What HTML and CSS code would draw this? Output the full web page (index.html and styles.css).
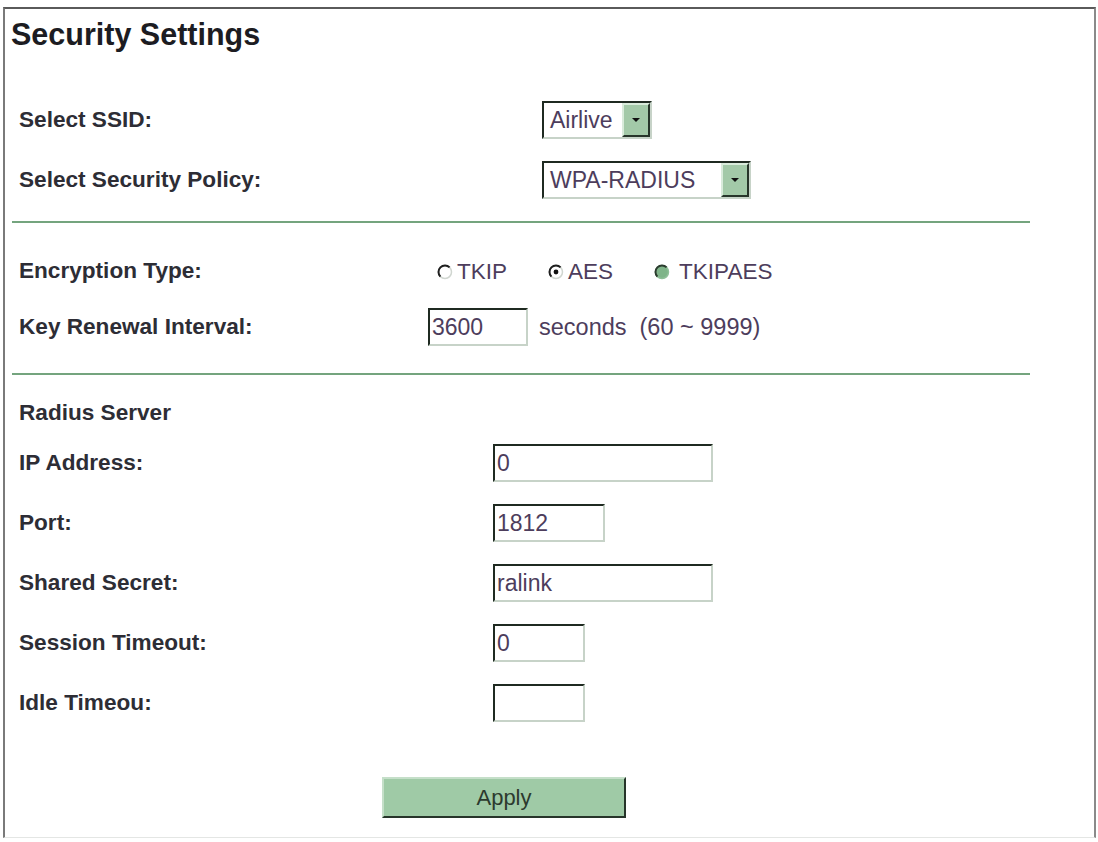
FILE: index.html
```html
<!DOCTYPE html>
<html lang="en">
<head>
  <meta charset="UTF-8" />
  <title>Security Settings</title>
  <link rel="stylesheet" href="styles.css">
</head>
<body>
  <div class="frame">
    <h1 class="title">Security Settings</h1>

    <div class="section sec-ssid">
      <div class="row">
        <span class="label">Select SSID:</span>
        <div class="select select-ssid">
          <span class="select-text">Airlive</span>
          <span class="select-btn"><span class="arrow"></span></span>
        </div>
      </div>
      <div class="row">
        <span class="label">Select Security Policy:</span>
        <div class="select select-policy">
          <span class="select-text">WPA-RADIUS</span>
          <span class="select-btn"><span class="arrow"></span></span>
        </div>
      </div>
    </div>

    <div class="divider div-one"></div>

    <div class="section sec-enc">
      <div class="row row-radio">
        <span class="label">Encryption Type:</span>
        <div class="radios">
          <label class="opt">
            <svg class="dot" width="16" height="16" viewBox="0 0 16 16"><circle cx="8" cy="8" r="6.5" fill="#fff" stroke="#d0d6d0" stroke-width="1.5"/><path d="M3.4 12.6 A6.5 6.5 0 0 1 12.6 3.4" fill="none" stroke="#1f1f1f" stroke-width="2"/></svg>
            <span>TKIP</span>
          </label>
          <label class="opt">
            <svg class="dot" width="16" height="16" viewBox="0 0 16 16"><circle cx="8" cy="8" r="6.5" fill="#fff" stroke="#d0d6d0" stroke-width="1.5"/><path d="M3.4 12.6 A6.5 6.5 0 0 1 12.6 3.4" fill="none" stroke="#1f1f1f" stroke-width="2"/><circle cx="8" cy="8" r="2.4" fill="#111"/></svg>
            <span>AES</span>
          </label>
          <label class="opt opt-last">
            <svg class="dot" width="16" height="16" viewBox="0 0 16 16"><circle cx="8" cy="8" r="6.5" fill="#7fb489" stroke="#8fbf98" stroke-width="1.5"/><path d="M3.4 12.6 A6.5 6.5 0 0 1 12.6 3.4" fill="none" stroke="#2b3b2e" stroke-width="2"/></svg>
            <span>TKIPAES</span>
          </label>
        </div>
      </div>
      <div class="row row-key">
        <span class="label">Key Renewal Interval:</span>
        <input class="field w-key" type="text" value="3600">
        <span class="unit">seconds</span>
        <span class="range">(60 ~ 9999)</span>
      </div>
    </div>

    <div class="divider div-two"></div>

    <div class="section sec-radius">
      <div class="row row-head">
        <span class="label">Radius Server</span>
      </div>
      <div class="row">
        <span class="label">IP Address:</span>
        <input class="field w-long" type="text" value="0">
      </div>
      <div class="row">
        <span class="label">Port:</span>
        <input class="field w-port" type="text" value="1812">
      </div>
      <div class="row">
        <span class="label">Shared Secret:</span>
        <input class="field w-long" type="text" value="ralink">
      </div>
      <div class="row">
        <span class="label">Session Timeout:</span>
        <input class="field w-short" type="text" value="0">
      </div>
      <div class="row">
        <span class="label">Idle Timeou:</span>
        <input class="field w-short" type="text" value="">
      </div>
    </div>

    <div class="actions">
      <button class="apply">Apply</button>
    </div>
  </div>
</body>
</html>
```

FILE: styles.css
```css
body {
  margin: 0;
  background: #fff;
  font-family: "Liberation Sans", Arial, sans-serif;
  color: #2d2d35;
}

.frame {
  box-sizing: border-box;
  width: 1093px;
  height: 831px;
  margin: 7px 0 0 3px;
  border-top: 2px solid #5a5a5a;
  border-left: 2px solid #7a7a7a;
  border-right: 2px solid #8a8a8a;
  border-bottom: 1px solid #e4e6e4;
}

.title {
  margin: 0;
  height: 50px;
  line-height: 50px;
  padding-left: 6px;
  font-size: 30.5px;
  font-weight: bold;
  color: #1c1c22;
}

.section {
  display: flex;
  flex-direction: column;
}

.row {
  display: flex;
  align-items: center;
  height: 40px;
  padding-left: 14px;
}

.label {
  flex: none;
  font-size: 22.6px;
  font-weight: bold;
}

/* first block: ssid + policy */
.sec-ssid {
  margin-top: 41px;
  gap: 20px;
}
.sec-ssid .label { width: 523px; }

.select {
  box-sizing: border-box;
  display: flex;
  height: 38px;
  border: 2px solid;
  border-color: #1f2a21 #c7d3c8 #c7d3c8 #1f2a21;
  background: #fff;
}
.select-ssid { width: 110px; }
.select-policy { width: 209px; }

.select-text {
  flex: 1;
  padding-left: 6px;
  font-size: 23px;
  line-height: 34px;
  color: #4d3d5c;
}

.select-btn {
  box-sizing: border-box;
  width: 28px;
  display: flex;
  align-items: center;
  justify-content: center;
  background: #a3c9a8;
  border: 2px solid;
  border-color: #d9ebdb #27352a #27352a #d9ebdb;
}

.arrow {
  width: 0;
  height: 0;
  border-left: 4px solid transparent;
  border-right: 4px solid transparent;
  border-top: 4px solid #111;
}

.divider {
  width: 1018px;
  height: 2px;
  margin-left: 7px;
  background: #74a47e;
}
.div-one { margin-top: 21px; }
.div-two { margin-top: 26px; }

/* second block: encryption */
.sec-enc {
  margin-top: 28px;
  gap: 16px;
}
.sec-enc .label { width: 409px; }

.radios {
  display: flex;
  align-items: center;
  padding-left: 9px;
  padding-top: 2px;
  font-size: 22.5px;
  color: #4d3d5c;
}

.opt {
  display: flex;
  align-items: center;
  gap: 4px;
  margin-right: 41px;
}
.opt-last { gap: 9px; }

.dot {
  flex: none;
  display: block;
  width: 16px;
  height: 16px;
}

.field {
  box-sizing: border-box;
  height: 38px;
  margin: 0;
  padding: 0 0 0 2px;
  border: 2px solid;
  border-color: #1f2a21 #c7d3c8 #c7d3c8 #1f2a21;
  background: #fff;
  font-family: "Liberation Sans", Arial, sans-serif;
  font-size: 23px;
  color: #4d3d5c;
  outline: none;
}

.w-key { width: 100px; }
.w-long { width: 220px; }
.w-port { width: 112px; }
.w-short { width: 92px; }

.unit {
  margin-left: 11px;
  font-size: 23.5px;
  color: #4d3d5c;
}
.range {
  margin-left: 13px;
  font-size: 23.5px;
  color: #4d3d5c;
}

/* third block: radius server */
.sec-radius {
  margin-top: 23px;
  gap: 20px;
}
.sec-radius .label { width: 474px; }
.row-head {
  height: 30px;
  margin-bottom: -5px;
}

.actions {
  margin-top: 54px;
  padding-left: 377px;
}

.apply {
  box-sizing: border-box;
  width: 244px;
  height: 41px;
  background: #9fcaa6;
  border: 2px solid;
  border-color: #c5dfc9 #27352a #27352a #c5dfc9;
  font-family: "Liberation Sans", Arial, sans-serif;
  font-size: 22px;
  color: #2c3a2e;
  cursor: pointer;
}
```
